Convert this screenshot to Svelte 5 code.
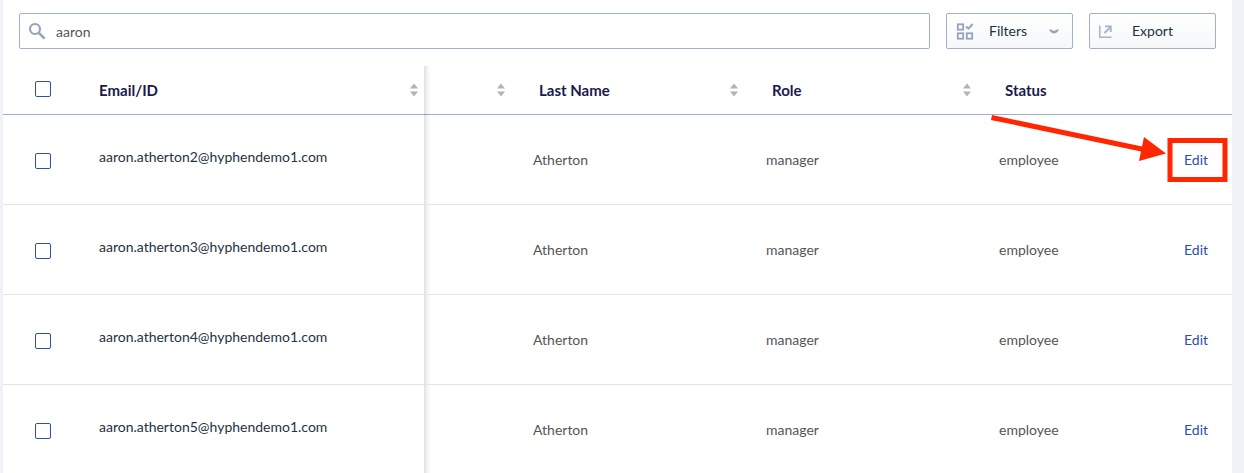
<script lang="ts">
  type User = { email: string; lastName: string; role: string; status: string };

  let search = $state('aaron');
  let selected = $state<string[]>([]);

  const users: User[] = [2, 3, 4, 5].map((n) => ({
    email: `aaron.atherton${n}@hyphendemo1.com`,
    lastName: 'Atherton',
    role: 'manager',
    status: 'employee'
  }));

  const allSelected = $derived(selected.length === users.length);

  function toggleAll() {
    selected = allSelected ? [] : users.map((user) => user.email);
  }
</script>

{#snippet sortButton(label: string)}
  <button class="sort" aria-label="Sort by {label}">
    <svg width="8" height="14" viewBox="0 0 8 14" fill="#b3b3b3">
      <path d="M4 0.5L8 5.5H0L4 0.5Z" />
      <path d="M4 13.5L0 8.5H8L4 13.5Z" />
    </svg>
  </button>
{/snippet}

<div class="page">
  <main class="panel">
    <div class="toolbar">
      <label class="search">
        <svg width="18" height="18" viewBox="0 0 18 18" fill="none" stroke="#93a5be">
          <circle cx="7" cy="7" r="5" stroke-width="2.2" />
          <path d="M10.8 10.8L16.6 16.6" stroke-width="2.6" />
        </svg>
        <input type="text" bind:value={search} aria-label="Search users" />
      </label>

      <button class="tool-btn">
        <svg width="18" height="18" viewBox="0 0 18 18" fill="none" stroke="#93a5be">
          <rect x="1.8" y="2.3" width="5.4" height="5.4" stroke-width="1.8" />
          <rect x="1.8" y="11.3" width="5.4" height="5.4" stroke-width="1.8" />
          <rect x="10.8" y="11.3" width="5.4" height="5.4" stroke-width="1.8" />
          <path d="M10 4.5L12.5 6.7L16.6 2" stroke-width="2" />
        </svg>
        <span>Filters</span>
        <svg class="chevron" width="10" height="6" viewBox="0 0 10 6" fill="#93a5be">
          <path d="M0.6 1L5 3L9.4 1V2.8C8.2 4.4 6.6 5.4 5 5.4C3.4 5.4 1.8 4.4 0.6 2.8Z" />
        </svg>
      </button>

      <button class="tool-btn">
        <svg width="18" height="18" viewBox="0 0 18 18" fill="none" stroke="#a3b3ca">
          <path d="M0.8 3.5V15.2H12.5" stroke-width="1.5" />
          <path d="M5.5 11L11.5 5" stroke-width="1.8" />
          <path d="M6 4.4H11.8V10" stroke-width="1.8" />
        </svg>
        <span>Export</span>
      </button>
    </div>

    <table>
      <colgroup>
        <col class="col-check" />
        <col class="col-email" />
        <col class="col-first" />
        <col class="col-wide" />
        <col class="col-wide" />
        <col />
        <col class="col-edit" />
      </colgroup>
      <thead>
        <tr>
          <th class="check">
            <input type="checkbox" checked={allSelected} onchange={toggleAll} aria-label="Select all" />
          </th>
          <th class="email"><div class="head">Email/ID {@render sortButton('email')}</div></th>
          <th><div class="head end">{@render sortButton('first name')}</div></th>
          <th><div class="head">Last Name {@render sortButton('last name')}</div></th>
          <th><div class="head">Role {@render sortButton('role')}</div></th>
          <th><div class="head">Status</div></th>
          <th></th>
        </tr>
      </thead>
      <tbody>
        {#each users as user (user.email)}
          <tr>
            <td class="check">
              <input
                type="checkbox"
                value={user.email}
                bind:group={selected}
                aria-label="Select {user.email}"
              />
            </td>
            <td class="email">{user.email}</td>
            <td></td>
            <td>{user.lastName}</td>
            <td>{user.role}</td>
            <td>{user.status}</td>
            <td><a href="#edit">Edit</a></td>
          </tr>
        {/each}
      </tbody>
    </table>

    <!-- Callout pointing at the first Edit link -->
    <svg class="callout" width="248" height="80" viewBox="0 0 248 80" aria-hidden="true">
      <path d="M7.5 9.5L160 41.5" stroke="#ff2600" stroke-width="5" />
      <path d="M182 45.5L160 29L155 53Z" fill="#ff2600" />
      <rect x="186" y="32.5" width="55" height="39" fill="none" stroke="#ff2600" stroke-width="5" />
    </svg>
  </main>
</div>

<style>
  :global(body) {
    margin: 0;
    background: #eff3f7;
  }

  .page {
    box-sizing: border-box;
    height: 100vh;
    overflow: hidden;
    padding: 0 12px 0 3px;
    font-family: Lato, 'Liberation Sans', sans-serif;
    font-size: 14px;
    line-height: 20px;
    color: #555;
  }

  .panel {
    position: relative;
    min-height: 100%;
    background: #fff;
  }

  .toolbar {
    display: flex;
    gap: 16px;
    padding: 13px 16px 17px;
  }

  .search,
  .tool-btn {
    box-sizing: border-box;
    height: 36px;
    display: flex;
    align-items: center;
    border: 1px solid #a0b1ca;
    border-radius: 2px;
  }

  .search {
    flex: 1;
    gap: 10px;
    padding: 0 8px;
  }

  .search input {
    flex: 1;
    min-width: 0;
    padding: 2px 0 0;
    border: none;
    outline: none;
    background: transparent;
    font: inherit;
    color: #555;
  }

  .tool-btn {
    width: 127px;
    gap: 15px;
    padding: 0 13px 0 9px;
    background: linear-gradient(#fff, #f5f7f9);
    font: inherit;
    color: #1f3342;
    cursor: pointer;
  }

  .chevron {
    margin-left: auto;
  }

  table {
    width: 100%;
    table-layout: fixed;
    border-spacing: 0;
  }

  .col-check {
    width: 80px;
  }

  .col-email {
    width: 341px;
  }

  .col-first {
    width: 93px;
  }

  .col-wide {
    width: 233px;
  }

  .col-edit {
    width: 64px;
  }

  th,
  td {
    box-sizing: border-box;
    padding: 0 16px;
    text-align: left;
    border-bottom: 1px solid #e2e4e7;
  }

  th {
    height: 49px;
    padding: 0 12px 0 22px;
    border-color: #9cb0ca;
    color: #1b1a4b;
    font-size: 15px;
    font-weight: 700;
  }

  td {
    height: 90px;
  }

  th.check {
    padding: 0 0 2px 32px;
  }

  td.check {
    padding: 2px 0 0 32px;
  }

  .email {
    position: relative;
    padding: 0 6px 6px 16px;
    color: #1f3342;
  }

  th.email {
    padding-bottom: 0;
    color: #1b1a4b;
  }

  .email::after {
    content: '';
    position: absolute;
    top: 0;
    bottom: -1px;
    left: 100%;
    width: 7px;
    background: linear-gradient(to right, rgba(0, 0, 0, 0.12), rgba(0, 0, 0, 0.04) 50%, rgba(0, 0, 0, 0));
  }

  td.email::after {
    bottom: 0;
  }

  .head {
    display: flex;
    align-items: center;
    justify-content: space-between;
  }

  .head.end {
    justify-content: flex-end;
  }

  .sort {
    display: flex;
    padding: 0;
    border: none;
    background: none;
    cursor: pointer;
  }

  input[type='checkbox'] {
    appearance: none;
    display: block;
    width: 16px;
    height: 16px;
    margin: 0;
    border: 1px solid #2d4fa5;
    border-radius: 2px;
    background: #fff;
  }

  input[type='checkbox']:checked {
    background: #2d4fa5;
  }

  a {
    color: #2d4fa5;
    text-decoration: none;
  }

  .callout {
    position: absolute;
    top: 108px;
    right: 0;
    pointer-events: none;
  }
</style>
